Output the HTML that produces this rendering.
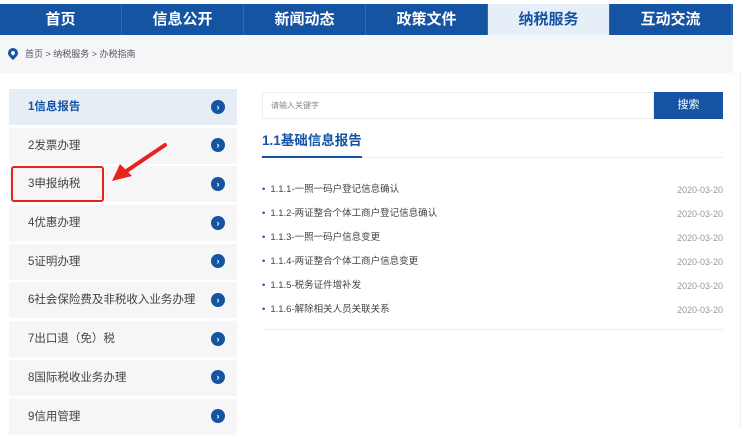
<!DOCTYPE html><html><head><meta charset="utf-8"><style>
*{margin:0;padding:0;box-sizing:border-box}
body{width:752px;height:429px;background:#fff;font-family:"Liberation Sans","Noto Sans CJK SC",sans-serif;position:relative;overflow:hidden}
.nav{position:absolute;left:0;top:4px;width:733px;height:31px;background:#1553a3;display:flex}
.nav div{width:122px;color:#fff;font-weight:bold;font-size:15px;text-align:center;line-height:31px;border-right:1px solid #2f68b3}
.nav div.on{background:#e6eef8;color:#1553a3}
.bc{position:absolute;left:0;top:35px;width:733px;height:38px;background:#f5f6f8;font-size:9px;color:#556;line-height:38px;padding-left:25px}
.pin{position:absolute;left:8px;top:13px;width:10px;height:10px;border:3px solid #1553a3;border-radius:50% 50% 50% 0;transform:rotate(-45deg)}
.side{position:absolute;left:9px;top:89px;width:228px}
.it{height:36px;margin-bottom:2.7px;background:#f6f6f7;font-size:11.5px;color:#444;line-height:36px;padding-left:19px;position:relative}
.it.on{background:#e7edf5;color:#1553a3;font-weight:bold}
.it i{position:absolute;right:12px;top:10.5px;width:14px;height:14px;border-radius:50%;background:#1553a3;color:#fff;font-size:9px;line-height:14px;text-align:center;font-style:normal;font-weight:bold}
.search{position:absolute;left:262px;top:92px;width:392px;height:27px;border:1px solid #eee;font-size:8px;color:#888;line-height:25px;padding-left:8px}
.btn{position:absolute;left:654px;top:92px;width:69px;height:27px;background:#1553a3;color:#fff;font-size:11px;text-align:center;line-height:27px}
.ttl{position:absolute;left:262px;top:129px;font-size:13.5px;font-weight:bold;color:#1553a3}
.ul{position:absolute;left:262px;top:157px;width:461px;height:1px;background:#eee}
.ul b{position:absolute;left:0;top:-1px;width:100px;height:2px;background:#1553a3}
.li{position:absolute;left:262px;width:461px;font-size:9.5px;color:#444;height:14px;line-height:14px}
.li span{position:absolute;right:0;color:#999;font-size:9px}
.li:before{content:"•";color:#1553a3;margin-right:5px}
.bl{position:absolute;left:262px;top:329px;width:461px;height:1px;background:#eee}
.vr{position:absolute;left:740px;top:73px;width:1px;height:356px;background:#eee}
.red{position:absolute;left:11px;top:166px;width:93px;height:36px;border:2.5px solid #e8231f;border-radius:3px}
</style></head><body>
<div class="nav"><div>首页</div><div>信息公开</div><div>新闻动态</div><div>政策文件</div><div class="on">纳税服务</div><div>互动交流</div></div>
<div class="bc"><span class="pin"></span>首页 &gt; 纳税服务 &gt; 办税指南</div>
<div class="side">
<div class="it on">1信息报告<i>›</i></div>
<div class="it">2发票办理<i>›</i></div>
<div class="it">3申报纳税<i>›</i></div>
<div class="it">4优惠办理<i>›</i></div>
<div class="it">5证明办理<i>›</i></div>
<div class="it">6社会保险费及非税收入业务办理<i>›</i></div>
<div class="it">7出口退（免）税<i>›</i></div>
<div class="it">8国际税收业务办理<i>›</i></div>
<div class="it">9信用管理<i>›</i></div>
</div>
<div class="red"></div>
<svg style="position:absolute;left:100px;top:140px" width="70" height="45"><path d="M65 5 L25 32" stroke="#e8231f" stroke-width="4" stroke-linecap="round"/><polygon points="12,41 20,24 32,36" fill="#e8231f"/></svg>
<div class="search">请输入关键字</div><div class="btn">搜索</div>
<div class="ttl">1.1基础信息报告</div>
<div class="ul"><b></b></div>
<div class="li" style="top:183px">1.1.1-一照一码户登记信息确认<span>2020-03-20</span></div>
<div class="li" style="top:207px">1.1.2-两证整合个体工商户登记信息确认<span>2020-03-20</span></div>
<div class="li" style="top:231px">1.1.3-一照一码户信息变更<span>2020-03-20</span></div>
<div class="li" style="top:255px">1.1.4-两证整合个体工商户信息变更<span>2020-03-20</span></div>
<div class="li" style="top:279px">1.1.5-税务证件增补发<span>2020-03-20</span></div>
<div class="li" style="top:303px">1.1.6-解除相关人员关联关系<span>2020-03-20</span></div>
<div class="bl"></div><div class="vr"></div>
</body></html>
